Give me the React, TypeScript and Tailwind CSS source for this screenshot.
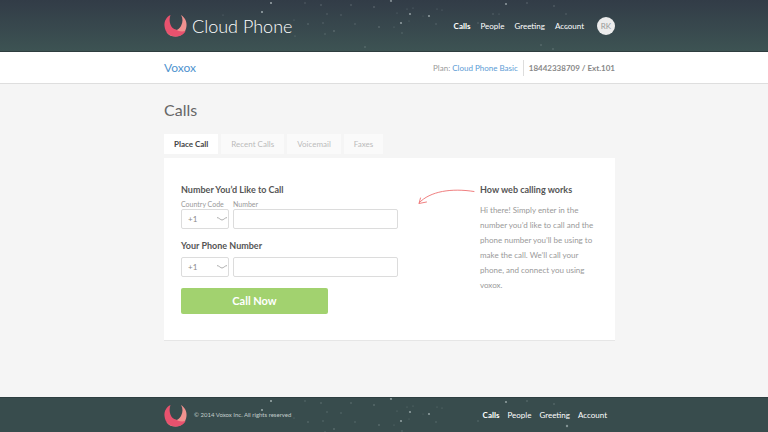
import { useState } from 'react';
import clsx from 'clsx';

const navItems = ['Calls', 'People', 'Greeting', 'Account'];
const tabs = ['Place Call', 'Recent Calls', 'Voicemail', 'Faxes'];

// x, y, radius, opacity
const stars = [
  [59, 15, 0.5, 0.3], [98, 12, 1, 0.6], [107, 3, 1, 0.6], [130, 20, 0.5, 0.3],
  [131, 36, 0.6, 0.3], [141, 3, 0.7, 0.25], [157, 5, 0.8, 0.25], [163, 14, 0.7, 0.25],
  [177, 15, 0.7, 0.25], [187, 5, 0.8, 0.25], [210, 7, 0.8, 0.3], [144, 24, 0.8, 0.25],
  [159, 23, 0.7, 0.25], [161, 34, 0.7, 0.25], [170, 31, 0.8, 0.3], [191, 24, 0.7, 0.25],
  [215, 27, 0.8, 0.3], [201, 47, 0.8, 0.25], [227, 1, 1.1, 0.45], [233, 13, 0.6, 0.25],
  [243, 9, 0.6, 0.25], [249, 8, 0.6, 0.25], [246, 14, 1.1, 0.5], [245, 21, 0.5, 0.25],
  [237, 23, 1.1, 0.5], [230, 27, 0.6, 0.25], [238, 33, 0.7, 0.25], [265, 16, 1.1, 0.5],
  [259, 16, 0.5, 0.2], [273, 9, 0.6, 0.25], [278, 10, 0.6, 0.25], [272, 24, 0.7, 0.25],
  [314, 23, 0.7, 0.25], [329, 14, 0.7, 0.25], [342, 4, 1.1, 0.5], [363, 3, 0.8, 0.25],
  [335, 14, 0.6, 0.25], [390, 6, 0.8, 0.25], [402, 14, 0.7, 0.25], [403, 28, 1.2, 0.45],
  [377, 45, 0.8, 0.25], [389, 49, 0.8, 0.25],
];

function Stars() {
  return (
    <svg className="absolute inset-0 w-full h-full pointer-events-none" fill="#e3eeee" aria-hidden="true">
      {stars.map(([x, y, r, o], i) => (
        <circle key={i} cx={x} cy={y} r={r} opacity={o} />
      ))}
    </svg>
  );
}

function Logo() {
  return (
    <svg viewBox="0 0 46 46" className="w-[23px] h-[23px] shrink-0" aria-hidden="true">
      <path d="M34 2C42 7 46 15 45 24 44 37 34 45 23 45 15 45 8 42 5 36 20 36 29 32 34 24 38 16 38 8 34 2Z" fill="#f0928f" />
      <path d="M13 2C5 6 0 14 1 24 2 37 12 45 23 45 32 45 40 41 43 34 36 36 29 35 24 31 14 30 8 15 13 2Z" fill="#e8526e" />
    </svg>
  );
}

function Nav({ className, label }: { className?: string; label: string }) {
  return (
    <nav aria-label={label} className={clsx('flex text-[8px] leading-3 text-white', className)}>
      {navItems.map((item, i) => (
        <a key={item} href="#" className={i === 0 ? 'font-bold' : undefined}>
          {item}
        </a>
      ))}
    </nav>
  );
}

function CountrySelect({ id, label }: { id: string; label?: string }) {
  return (
    <div className="relative w-12">
      <select
        id={id}
        aria-label={label}
        className="block w-full h-5 pl-[6px] appearance-none rounded-xs border border-[#dcdcdc] bg-white text-[8px] text-[#8a8a8a]"
      >
        <option>+1</option>
        <option>+44</option>
      </select>
      <svg viewBox="0 0 10 4" className="absolute right-[2px] top-2 w-[10px] h-1 pointer-events-none" fill="none" stroke="#999" strokeWidth=".8" aria-hidden="true">
        <path d="M0 .6C2 .6 3.500 3 5 3S8 .6 10 .6" />
      </svg>
    </div>
  );
}

const inputClass = 'block w-full h-5 px-2 rounded-xs border border-[#dcdcdc] bg-white text-[8px] text-[#8a8a8a]';

export default function App() {
  const [tab, setTab] = useState('Place Call');

  return (
    <div className="min-h-screen flex flex-col bg-[#f5f5f5] font-['Lato',sans-serif] text-[#555]">
      <header className="pl-[11px] bg-linear-to-b from-[#323c47] to-[#3d5353] border-b border-[#2e3d3f]">
        <div className="relative max-w-[451px] h-[51px] mx-auto flex items-center">
          <Stars />
          <Logo />
          <span className="ml-[5px] text-[18px] leading-6 font-light text-white">Cloud Phone</span>
          <Nav label="Main" className="ml-auto gap-[10px]" />
          <button className="ml-[13px] w-[18px] h-[18px] rounded-full bg-[#ececec] text-[8px] text-[#999]">RK</button>
        </div>
      </header>

      <div className="pl-[11px] bg-white border-b border-[#dedede]">
        <div className="max-w-[451px] h-[31px] mx-auto flex items-center">
          <a href="#" className="text-[12px] leading-4 text-[#4f93ce]">Voxox</a>
          <p className="ml-auto text-[8px] leading-3 text-[#999]">
            Plan: <a href="#" className="text-[#5b9bd5]">Cloud Phone Basic</a>
          </p>
          <p className="ml-[5px] pl-[5px] border-l border-[#ddd] text-[8px] leading-4 font-bold text-[#888]">
            18442338709 / Ext.101
          </p>
        </div>
      </div>

      <main className="pl-[11px]">
        <div className="max-w-[451px] mx-auto pt-4">
          <h1 className="text-[16px] leading-5 text-[#666]">Calls</h1>

          <div role="tablist" className="mt-[14px] flex gap-[3px]">
            {tabs.map((name) => (
              <button
                key={name}
                role="tab"
                aria-selected={tab === name}
                onClick={() => setTab(name)}
                className={clsx(
                  'h-5 px-[10px] text-[8px] leading-3',
                  tab === name ? 'bg-white font-bold text-[#444]' : 'bg-[#fafafa] text-[#bbb]'
                )}
              >
                {name}
              </button>
            ))}
          </div>

          <section className="mt-1 pl-[17px] pr-4 pt-[26px] pb-[26px] flex bg-white border-b border-[#e6e6e6]">
            <form className="w-[217px]" onSubmit={(e) => e.preventDefault()}>
              <h2 className="text-[9px] leading-3 font-bold">Number You’d Like to Call</h2>
              <div className="mt-1 grid grid-cols-[48px_1fr] gap-x-1 text-[7px] leading-[9px] text-[#999]">
                <label htmlFor="to-code">Country Code</label>
                <label htmlFor="to-number">Number</label>
                <CountrySelect id="to-code" />
                <input id="to-number" type="tel" className={inputClass} />
              </div>

              <h2 className="mt-[11px] text-[9px] leading-3 font-bold">
                <label htmlFor="from-number">Your Phone Number</label>
              </h2>
              <div className="mt-[5px] grid grid-cols-[48px_1fr] gap-x-1">
                <CountrySelect id="from-code" label="Your country code" />
                <input id="from-number" type="tel" className={inputClass} />
              </div>

              <button className="mt-[11px] w-[147px] h-[26px] block rounded-xs bg-[#a2d26f] text-[11px] leading-4 font-bold text-white">
                Call Now
              </button>
            </form>

            <svg viewBox="0 0 58 18" className="ml-5 mt-[3px] w-[58px] h-[18px]" fill="none" stroke="#f07f80" strokeWidth="1" strokeLinecap="round" aria-hidden="true">
              <path d="M56 4.500C34 1 12 4 1 16M2.500 11 1 16.500 8.500 15" />
            </svg>

            <aside className="ml-auto w-[119px]">
              <h2 className="text-[9px] leading-3 font-bold">How web calling works</h2>
              <p className="mt-[7px] text-[8px] leading-[15px] text-[#999]">
                Hi there! Simply enter in the number you’d like to call and the phone number you’ll be using to make
                the call. We’ll call your phone, and connect you using voxox.
              </p>
            </aside>
          </section>
        </div>
      </main>

      <footer className="mt-auto pl-[11px] bg-[#384c4d] border-t border-[#2e3f41]">
        <div className="relative max-w-[451px] h-[34px] mx-auto pr-2 flex items-center">
          <Stars />
          <Logo />
          <small className="ml-[7px] text-[6px] leading-3 text-[#c3cccc]">© 2014 Voxox Inc. All rights reserved</small>
          <Nav label="Footer" className="ml-auto gap-2" />
        </div>
      </footer>
    </div>
  );
}
